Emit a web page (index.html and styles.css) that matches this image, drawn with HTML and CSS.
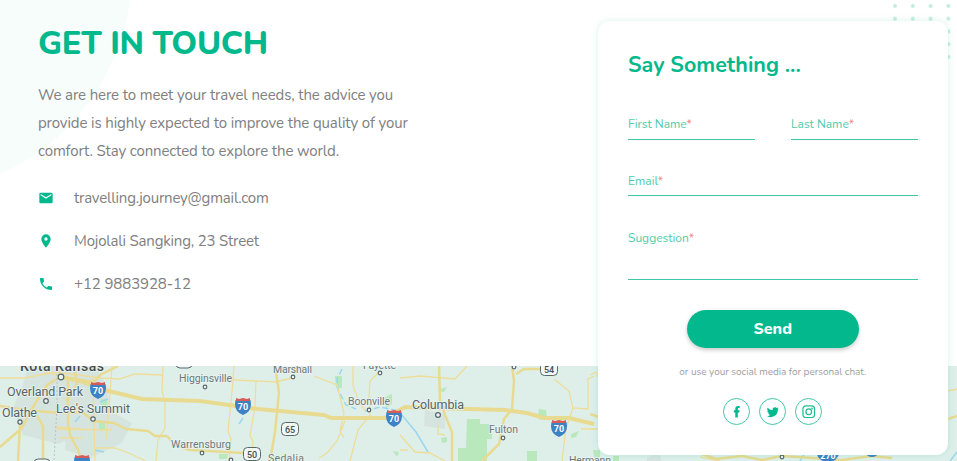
FILE: index.html
```html
<!DOCTYPE html>
<html lang="en">
<head>
<meta charset="utf-8">
<title>Get in touch</title>
<link rel="stylesheet" href="styles.css">
</head>
<body>
<main class="page">
  <div class="blob"></div>
  <svg class="map" viewBox="0 366 957 95" width="957" height="95">
    <rect y="366" width="957" height="95" fill="#deefea"/>
    <g fill="#d3dfdc">
      <path d="M28 366h67l12 20 3 22-12 18-40 18-35-9-10-27 10-24zM66 415l40-7 26 15-10 20-32 15-25-8z" opacity=".7"/>
      <path d="M425 410l20 4v15l-21-3zM647 458l12-7 3 10h-15z" opacity=".7"/>
    </g>
    <g fill="#b8e8bc">
      <path d="M467 419h13v5h12v15h-5v22h-29v-13h8zM99 423h6v6l-6 1zM387 396l5-2v10l-6 4zM539 409l7 1 1 9-7 1-2-6zM527 451h10v10h-10zM571 434l8-3-3 6-5 1zM440 389l7-2-3 5-5-1zM441 438l6-1v5l-5 1zM393 451l6 1-2 5zM219 454h9l-1 5h-8zM335 376h7v12h-6zM101 399h6v8h-6zM385 397h7v7h-7zM593 450h7v7h-6zM613 456h6v5h-6z"/>
    </g>
    <g fill="none" stroke="#9bd6ef" stroke-width="1.5">
      <path d="M342 369l-5 10 1 11 8 15 10 4M365 411l15-4 20 4" stroke-dasharray="6 3"/>
      <path d="M401 414l15 18 12 20M80 416l-5 6M243 418l-4 6M95 450l9 2M100 402l8-3M950 461l7-9M800 461l5-8"/>
    </g>
    <g fill="none" stroke="#eedd98" stroke-width="1.3">
      <path d="M0 378h25l30-6 46 6 18 1 16-5 28 1M93 378l2 83M112 366l-2 28-4 45M42 366l5 7 15 3M163 366l-1 25 3 12v25l-7 12-2 21M55 427l38 3M112 425l-1 5-54-1M95 448h20l16 6 15 7M60 438h22M234 366l-1 15-5 50 3 8-2 22M200 378l35 2 41 2 19-5M314 376l23 9 7 28-4 18 4 7M353 366v20l5 13 7 12M380 371l-10 10-1 16 1 18-12 15-8 31M345 421l-8 20-10 12-8 5M400 378l20-2 35 3 12-13M554 379l15 12 4 17 15 1V379l6-3M573 408l-7 20-4 33M400 435l15 17 15 1 15 8M400 450h8M438 426v8l7 1M256 381l-1 25-5 30 3 5-1 20"/>
      <path d="M590 375l6-3 5 10M581 429h20M700 457l20 4M948 391l9-2"/>
    </g>
    <g fill="none" stroke="#e8da90" stroke-linejoin="round">
      <path stroke-width="4" d="M62 377l18 4 20 8 42 10 58 2 58 8 33 3 33 3 7 3h54l20-11 30 1 70 2 22 3 17 5h25l25 6"/>
      <path stroke-width="2.500" d="M0 406l25 4 35 3 22-1 12 9 20 2 12 6 22 2 7 5h12l8 9 15 5 54 3 13 5M0 447l22-19 11-21 14-22 14-9M35 412l8 14v35M20 424l-2 37M68 377v46l2 12 9 17 1 9M62 377l32 5 6-7 18-9M74 366l3 18-11 17M275 366l4 26-4 40-5 29M439 366l1 35 5 14 7 17v29M512 366l2 15-2 28-8 10-5 25-17 17M540 369h-16l-8 5M590 414l9 3M948 419l9-3"/>
      <path stroke-width="2.500" d="M702 454l14 5 26-3 20 4 20-4 30 2 30 2 30-4 20 2"/>
    </g>
    <path d="M57 366v40l-3 55" fill="none" stroke="#b7c3c4" stroke-dasharray="2 2"/>
    <g class="dots"><circle cx="61" cy="377" r="2.800"/><circle cx="46" cy="401" r="2.300"/><circle cx="20" cy="422" r="2.100"/><circle cx="93" cy="419" r="2.200"/><circle cx="205" cy="387" r="1.800"/><circle cx="293" cy="377" r="1.800"/><circle cx="369" cy="410" r="1.800"/><circle cx="438" cy="415" r="2.400"/><circle cx="503" cy="438" r="1.800"/><circle cx="514" cy="367" r="1.800"/><circle cx="380" cy="373" r="1.800"/><circle cx="202" cy="453" r="1.800"/><circle cx="231" cy="460" r="1.800"/><circle cx="782" cy="457" r="1.800"/></g>
    <g class="labels">
      <text class="city" x="20" y="371" textLength="84">Kota Kansas</text>
      <text x="7" y="396" textLength="76">Overland Park</text>
      <text x="2" y="417" textLength="35">Olathe</text>
      <text x="56" y="413" textLength="74">Lee's Summit</text>
      <text class="minor" x="179" y="382" textLength="53">Higginsville</text>
      <text class="minor" x="273" y="373" textLength="39">Marshall</text>
      <text class="minor" x="363" y="369" textLength="33">Fayette</text>
      <text class="minor" x="348" y="405" textLength="42">Boonville</text>
      <text x="412" y="409" textLength="52">Columbia</text>
      <text class="minor" x="489" y="433" textLength="29">Fulton</text>
      <text class="minor" x="171" y="448" textLength="60">Warrensburg</text>
      <text class="minor" x="268" y="462" textLength="36">Sedalia</text>
      <text class="minor" x="569" y="464" textLength="42">Hermann</text>
    </g>
    <defs><g id="shield"><path d="M-7.500-6h15l.5 4q0 8-8 11-8-3-8-11z" fill="#3d82c4"/><path d="M-7-8l3 1 4-1 4 1 3-1v3H-7z" fill="#d75b57"/></g></defs>
    <g class="route">
      <use href="#shield" x="98" y="390"/><text x="98" y="394">70</text>
      <use href="#shield" x="243" y="406"/><text x="243" y="410">70</text>
      <use href="#shield" x="394" y="418"/><text x="394" y="422">70</text>
      <use href="#shield" x="559" y="428"/><text x="559" y="432">70</text>
      <use href="#shield" x="82" y="463"/>
      <ellipse cx="828" cy="453" rx="11" ry="9" fill="#3d82c4"/><text x="828" y="459">270</text>
      <ellipse cx="872" cy="453" rx="6" ry="4" fill="#3d82c4"/>
    </g>
    <g class="us">
      <rect x="281.500" y="422.500" width="17" height="13" rx="4"/><text x="290" y="432.500">65</text>
      <rect x="243.500" y="447.500" width="17" height="13" rx="4"/><text x="252" y="457.500">50</text>
      <rect x="540.500" y="362.500" width="17" height="13" rx="4"/><text x="549" y="373">54</text>
      <rect x="176" y="358" width="16" height="10" rx="4"/>
      <rect x="34" y="459" width="16" height="10" rx="4"/>
    </g>
  </svg>
  <svg class="pattern" viewBox="0 0 64 64" width="64" height="64">
    <defs><pattern id="p" width="17.800" height="12.750" patternUnits="userSpaceOnUse"><circle cx="2" cy="6" r="2"/></pattern></defs>
    <rect width="64" height="60" fill="url(#p)"/>
  </svg>
  <section class="intro">
    <h1>GET IN TOUCH</h1>
    <p class="lead">We are here to meet your travel needs, the advice you<br>provide is highly expected to improve the quality of your<br>comfort. Stay connected to explore the world.</p>
    <ul class="contacts">
      <li><svg viewBox="0 0 24 24"><path d="M20 4H4a2 2 0 0 0-2 2v12c0 1.100.9 2 2 2h16a2 2 0 0 0 2-2V6a2 2 0 0 0-2-2zm0 4-8 5-8-5V6l8 5 8-5z"/></svg><span>travelling.journey@gmail.com</span></li>
      <li><svg viewBox="0 0 24 24"><path d="M12 2a7 7 0 0 0-7 7c0 5.250 7 13 7 13s7-7.750 7-13a7 7 0 0 0-7-7zm0 9.500a2.500 2.500 0 1 1 0-5 2.500 2.500 0 0 1 0 5z"/></svg><span>Mojolali Sangking, 23 Street</span></li>
      <li><svg viewBox="0 0 24 24"><path d="M6.620 10.790a15.100 15.100 0 0 0 6.590 6.590l2.200-2.200a1 1 0 0 1 1.020-.24c1.120.37 2.330.57 3.570.57a1 1 0 0 1 1 1V20a1 1 0 0 1-1 1A17 17 0 0 1 3 4a1 1 0 0 1 1-1h3.500a1 1 0 0 1 1 1c0 1.250.2 2.450.57 3.570a1 1 0 0 1-.25 1.020z"/></svg><span class="phone">+12 9883928-12</span></li>
    </ul>
  </section>
  <form class="card">
    <h2>Say Something ...</h2>
    <div class="names">
      <label class="field"><span>First Name<b>*</b></span></label>
      <label class="field"><span>Last Name<b>*</b></span></label>
    </div>
    <label class="field email"><span>Email<b>*</b></span></label>
    <label class="field suggestion"><span>Suggestion<b>*</b></span></label>
    <button type="button">Send</button>
    <p class="or">or use your social media for personal chat.</p>
    <div class="social">
      <a><svg viewBox="0 0 14 14"><path d="M5.500 13V7.700H4V5.500h1.500V3.900C5.500 2 6.700 1 8.400 1H10v2.200H9c-.7 0-.9.3-.9.900v1.400h1.900l-.3 2.200H8.100V13z"/></svg></a>
      <a><svg viewBox="0 0 24 24"><path d="M23.500 4.900a10 10 0 0 1-2.800.8 4.900 4.900 0 0 0 2.100-2.700 10 10 0 0 1-3.100 1.200 4.900 4.900 0 0 0-8.400 4.500A14 14 0 0 1 1.200 3.600a4.900 4.900 0 0 0 1.500 6.500 5 5 0 0 1-2.200-.6 4.900 4.900 0 0 0 3.900 4.900 5 5 0 0 1-2.200.1 4.900 4.900 0 0 0 4.600 3.400A10 10 0 0 1 0 19.900a14 14 0 0 0 21.500-12.400 10 10 0 0 0 2-2.600z"/></svg></a>
      <a><svg class="line" viewBox="0 0 14 14"><rect x="1" y="1" width="12" height="12" rx="3"/><circle cx="7" cy="7" r="2.900"/><circle cx="10.400" cy="3.600" r=".3"/></svg></a>
    </div>
  </form>
</main>
</body>
</html>
```
FILE: styles.css
```css
* { box-sizing: border-box; }
body { margin: 0; font-family: Nunito, Lato, "Open Sans", sans-serif; }
.page { position: relative; width: 957px; height: 461px; overflow: hidden; background: #fff; display: flex; justify-content: space-between; align-items: flex-start; padding: 21px 9.500px 0 38px; }
.blob { position: absolute; left: -316px; top: -254px; width: 448px; height: 448px; border-radius: 50%; background: #f6fdfb; }
.map { position: absolute; left: 0; top: 366px; }
.pattern { position: absolute; right: 0; top: 0; fill: #c3ecdf; }
.intro { position: relative; width: 400px; }
h1 { margin: 0; font-size: 32.500px; line-height: 44px; font-weight: 800; letter-spacing: -.3px; color: #02b88c; white-space: nowrap; }
.lead { margin: 16px 0 0; font-size: 15px; line-height: 28px; letter-spacing: -.125px; color: #808080; white-space: nowrap; }
.contacts { list-style: none; margin: 11px 0 0; padding: 0; color: #808080; font-size: 15px; letter-spacing: -.19px; }
.contacts .phone { letter-spacing: -.1px; }
.contacts li { height: 43.300px; display: flex; align-items: center; gap: 20px; }
.contacts svg { width: 16px; height: 16px; fill: #02b88c; }
.card { position: relative; width: 349.500px; height: 434px; border-radius: 12px; background: #fff; padding: 29px 30px 0; box-shadow: 0 0 7px rgba(2, 184, 140, .16); }
h2 { margin: 0; font-size: 21.500px; line-height: 30px; font-weight: 700; color: #02b88c; white-space: nowrap; }
.names { display: grid; grid-template-columns: 127px 127px; gap: 36px; margin-top: 36px; }
.field { display: block; height: 24px; border-bottom: 1px solid #3fc8a5; font-size: 12px; line-height: 16px; color: #4fcbac; }
.field b { color: #f78282; font-weight: 400; }
.email { margin-top: 33px; height: 23px; }
.suggestion { margin-top: 34px; height: 50px; }
button { display: block; width: 172px; height: 38px; margin: 30px auto 0; border: 0; border-radius: 19px; background: #02b88c; color: #fff; font: 800 16px/38px Nunito, Lato, sans-serif; padding: 0; box-shadow: 0 2px 4px rgba(0, 0, 0, .22); }
.or { margin: 16px 0 0; text-align: center; font-size: 10px; letter-spacing: -.04px; line-height: 16px; color: #a0a0a0; }
.social { display: flex; justify-content: center; gap: 9px; margin-top: 18px; }
.social a { width: 27px; height: 27px; border: 1px solid #3fc8a5; border-radius: 50%; display: flex; align-items: center; justify-content: center; }
.social svg { width: 13.500px; height: 13.500px; fill: #02b88c; }
.social a:nth-child(2) svg { width: 12px; height: 12px; }
.social svg.line { fill: none; stroke: #22bd95; stroke-width: 1.300; }
.map text { font-family: Roboto, sans-serif; }
.labels { font-size: 12.500px; fill: #566365; stroke: #eaf4f1; stroke-width: 1.500; paint-order: stroke; }
.labels .minor { font-size: 10.500px; fill: #6d7878; }
.labels .city { font-size: 14px; font-weight: 500; fill: #434d50; }
.dots { fill: #edf5f2; stroke: #58666a; stroke-width: 1.200; }
.route text { fill: #fff; font-size: 9px; font-weight: 700; text-anchor: middle; }
.us rect { fill: #f1f7f4; stroke: #59666a; stroke-width: 1; }
.us text { fill: #434f53; font-size: 9px; font-weight: 500; text-anchor: middle; }
```
